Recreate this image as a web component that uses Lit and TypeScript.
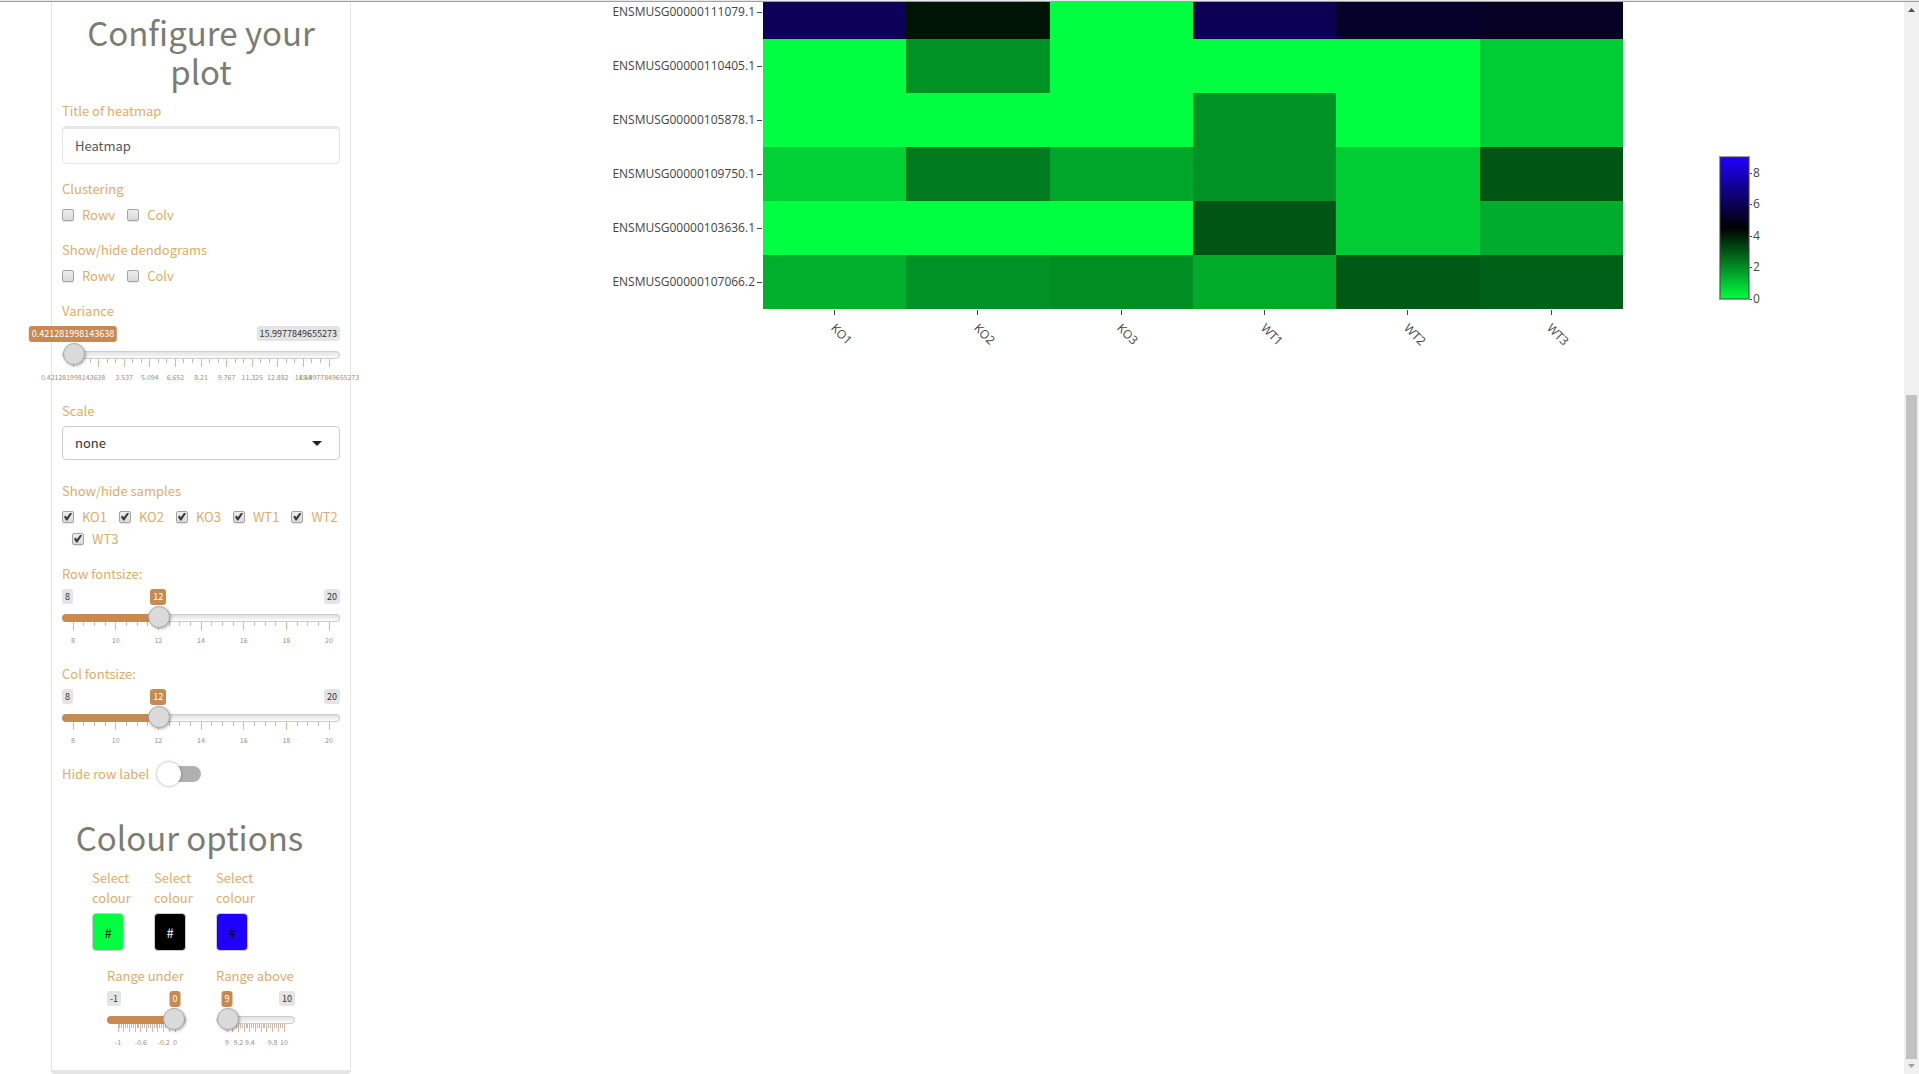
import { LitElement, html, svg, css, nothing } from "lit";
import { customElement, property } from "lit/decorators.js";

interface TickLabel {
  at: number;
  text: string;
}

const steps = (from: number, to: number, by: number): TickLabel[] => {
  const out: TickLabel[] = [];
  for (let v = from; v <= to; v += by) {
    out.push({ at: (v - from) / (to - from), text: String(v) });
  }
  return out;
};

@customElement("range-slider")
class RangeSlider extends LitElement {
  @property() label = "";
  @property({ type: Number }) min = 0;
  @property({ type: Number }) max = 1;
  @property({ type: Number }) value = 0;
  @property({ type: Number }) majors = 6;
  @property({ type: Number }) minors = 2;
  @property({ attribute: false }) ticks: TickLabel[] = [];

  static styles = css`
    :host {
      display: block;
      margin-bottom: 15px;
    }
    label {
      display: block;
      margin-bottom: 5px;
      white-space: nowrap;
    }
    .slider {
      position: relative;
      height: 60px;
    }
    .ends {
      display: flex;
      justify-content: space-between;
      height: 16px;
      margin-bottom: 1px;
    }
    .end,
    .current {
      box-sizing: border-box;
      padding: 0 3px;
      border-radius: 3px;
      white-space: nowrap;
      font-size: 9px;
    }
    .end {
      height: 15px;
      line-height: 15px;
      color: #333;
      background: #e4e4e4;
    }
    .max {
      margin-left: auto;
    }
    .current {
      position: absolute;
      top: 0;
      left: calc(11px + (100% - 22px) * var(--f));
      transform: translateX(-50%);
      min-width: 11px;
      height: 16px;
      line-height: 16px;
      color: #fff;
      background: #c78a51;
    }
    input {
      display: block;
      position: relative;
      appearance: none;
      width: 100%;
      height: 22px;
      margin: 0;
      background: none;
    }
    input::-webkit-slider-runnable-track {
      box-sizing: border-box;
      height: 8px;
      margin-top: 2px;
      border: 1px solid #ccc;
      border-radius: 4px;
      background: linear-gradient(#dedede, #fff) border-box;
    }
    input.filled::-webkit-slider-runnable-track {
      border-color: transparent;
      background: linear-gradient(
            90deg,
            #c78a51 calc(11px + (100% - 22px) * var(--f)),
            transparent 0
          )
          border-box,
        linear-gradient(#dedede, #fff) padding-box,
        linear-gradient(#ccc, #ccc) border-box;
    }
    input::-webkit-slider-thumb {
      appearance: none;
      box-sizing: border-box;
      width: 22px;
      height: 22px;
      margin-top: -9px;
      border: 1px solid #ababab;
      border-radius: 50%;
      background: #dadada;
      box-shadow: 1px 1px 3px rgba(0, 0, 0, 0.3);
    }
    .grid {
      position: absolute;
      left: 11px;
      top: 33px;
      width: calc(100% - 22px);
      height: 27px;
      overflow: visible;
    }
    .major {
      stroke: #dfb696;
      shape-rendering: crispEdges;
    }
    .minor {
      stroke: #bbb;
      shape-rendering: crispEdges;
    }
    text {
      font-size: 7px;
      fill: #999083;
      text-anchor: middle;
    }
  `;

  render() {
    const f = (this.value - this.min) / (this.max - this.min);
    const style = `--f:${f}`;
    const count = this.majors * (this.minors + 1);
    return html`
      <label for="range">${this.label}</label>
      <div class="slider" style=${style}>
        <svg class="grid" aria-hidden="true">
          ${Array.from({ length: count + 1 }, (_, i) => {
            const major = i % (this.minors + 1) === 0;
            const x = `${(i / count) * 100}%`;
            return svg`<line class=${major ? "major" : "minor"} x1=${x} x2=${x} y1="0" y2=${major ? 8 : 4} />`;
          })}
          ${this.ticks.map(
            (t) => svg`<text x=${`${t.at * 100}%`} y="21">${t.text}</text>`
          )}
        </svg>
        <div class="ends">
          ${f > 0.1 ? html`<span class="end">${this.min}</span>` : nothing}
          ${f < 0.9 ? html`<span class="end max">${this.max}</span>` : nothing}
        </div>
        <output class="current" for="range">${this.value}</output>
        <input
          id="range"
          type="range"
          class=${f > 0 ? "filled" : ""}
          min=${this.min}
          max=${this.max}
          step="any"
          .value=${String(this.value)}
        />
      </div>
    `;
  }
}

const SAMPLES = ["KO1", "KO2", "KO3", "WT1", "WT2", "WT3"];

const ROWS = [
  { gene: "ENSMUSG00000111079.1", cells: ["#0c0058", "#001405", "#00ff40", "#0b0054", "#050029", "#060024"] },
  { gene: "ENSMUSG00000110405.1", cells: ["#00ff40", "#009224", "#00ff40", "#00ff40", "#00ff40", "#00cd33"] },
  { gene: "ENSMUSG00000105878.1", cells: ["#00ff40", "#00ff40", "#00ff40", "#009224", "#00ff40", "#00cd33"] },
  { gene: "ENSMUSG00000109750.1", cells: ["#00d134", "#007a1e", "#00a629", "#009224", "#00cd33", "#005414"] },
  { gene: "ENSMUSG00000103636.1", cells: ["#00ff40", "#00ff40", "#00ff40", "#005414", "#00cd33", "#00ac2b"] },
  { gene: "ENSMUSG00000107066.2", cells: ["#00b02c", "#009224", "#008e23", "#00ab2a", "#005a16", "#006018"] },
];

@customElement("gene-heatmap")
class GeneHeatmap extends LitElement {
  static styles = css`
    :host {
      display: flex;
      font: 12px/16px "Open Sans", sans-serif;
      color: #444;
    }
    .plot {
      flex: 1;
      display: grid;
      grid-template-columns: 154px 1fr;
      align-content: start;
    }
    .genes,
    .cells {
      display: grid;
      grid-auto-rows: 54px;
    }
    .gene {
      display: flex;
      align-items: center;
      justify-content: flex-end;
      gap: 2px;
      padding-right: 1px;
    }
    .gene::after {
      content: "";
      width: 5px;
      height: 1px;
      background: #444;
    }
    .row,
    .samples {
      display: grid;
      grid-template-columns: repeat(6, 1fr);
    }
    .samples {
      grid-column: 2;
      padding-top: 1px;
    }
    .sample {
      display: flex;
      flex-direction: column;
      align-items: center;
    }
    .sample::before {
      content: "";
      width: 1px;
      height: 5px;
      background: #444;
    }
    .sample span {
      width: 0;
      margin: 3px 4px 0 0;
      transform: rotate(45deg);
      transform-origin: 0 50%;
      white-space: nowrap;
    }
    .scale {
      display: flex;
      padding: 171px 134px 0 96px;
    }
    .bar {
      box-sizing: border-box;
      width: 31px;
      height: 144px;
      border: 1px solid #999;
      outline: 1px solid rgba(68, 68, 68, 0.5);
      outline-offset: -2px;
      background: linear-gradient(#1f00ff, #000 50%, #00ff40);
    }
    .values {
      width: 20px;
      height: 144px;
      overflow: visible;
    }
    .values line {
      stroke: #444;
      shape-rendering: crispEdges;
    }
    .values text {
      fill: #444;
    }
  `;

  render() {
    return html`
      <div class="plot">
        <div class="genes">
          ${ROWS.map((r) => html`<div class="gene">${r.gene}</div>`)}
        </div>
        <div class="cells">
          ${ROWS.map(
            (r) => html`<div class="row">
              ${r.cells.map((c) => html`<div style="background:${c}"></div>`)}
            </div>`
          )}
        </div>
        <div class="samples">
          ${SAMPLES.map((s) => html`<div class="sample"><span>${s}</span></div>`)}
        </div>
      </div>
      <div class="scale">
        <div class="bar"></div>
        <svg class="values">
          ${[8, 6, 4, 2, 0].map((v) => {
            const y = Math.round(143 - (v / 9) * 142);
            return svg`<line x1="0" x2="2" y1=${y} y2=${y} /><text x="3" y=${y + 4}>${v}</text>`;
          })}
        </svg>
      </div>
    `;
  }
}

const VARIANCE_TICKS: TickLabel[] = [
  "0.421281998143638", "", "3.537", "5.094", "6.652", "8.21",
  "9.767", "11.325", "12.882", "14.44", "15.9977849655273",
]
  .map((text, i) => ({ at: i / 10, text }))
  .filter((t) => t.text !== "");

const UNDER_TICKS: TickLabel[] = [
  { at: 0, text: "-1" },
  { at: 0.4, text: "-0.6" },
  { at: 0.8, text: "-0.2" },
  { at: 1, text: "0" },
];

const ABOVE_TICKS: TickLabel[] = [
  { at: 0, text: "9" },
  { at: 0.2, text: "9.2" },
  { at: 0.4, text: "9.4" },
  { at: 0.8, text: "9.8" },
  { at: 1, text: "10" },
];

@customElement("app-root")
class AppRoot extends LitElement {
  static styles = css`
    :host {
      display: flex;
      box-sizing: border-box;
      height: 100vh;
      border-top: 1px solid #e8e8e8;
      box-shadow: inset 0 1px #a0a0a0;
      overflow: hidden;
      background: #fff;
      font: 13px/20px "Noto Sans CJK SC", sans-serif;
      color: #dfab68;
    }
    .page {
      flex: 1;
      display: flex;
      min-width: 0;
      margin-top: 1px;
      overflow: hidden;
    }
    .panel {
      box-sizing: border-box;
      flex: none;
      width: 300px;
      margin-left: 51px;
      padding: 11px 10px 0;
      border: solid #e5e5e5;
      border-width: 0 1px 4px;
      border-radius: 0 0 4px 4px;
    }
    h1 {
      margin: 0;
      font-size: 33px;
      font-weight: 400;
      line-height: 39px;
      text-align: center;
      color: #7c7c70;
    }
    .first {
      padding: 0 20px 10px;
    }
    .second {
      margin-top: 33px;
      padding: 0 23px 11px 0;
      line-height: 40px;
    }
    .group {
      margin: 0 0 15px;
      padding: 0;
      border: 0;
    }
    .group > label,
    legend {
      display: block;
      padding: 0;
      margin-bottom: 5px;
    }
    .text,
    select {
      display: block;
      box-sizing: border-box;
      width: 100%;
      padding: 0 12px;
      border-radius: 4px;
      background: #fff;
      font: inherit;
    }
    .text {
      height: 38px;
      border: 1px solid #e5e5e5;
      box-shadow: inset 0 2px #e9e9e9;
      color: #555;
    }
    .select {
      display: grid;
      align-items: center;
      margin-bottom: 21px;
    }
    .select > * {
      grid-area: 2 / 1;
    }
    .select > label {
      grid-area: 1 / 1;
    }
    select {
      appearance: none;
      height: 34px;
      border: 1px solid #ccc;
      color: #333;
    }
    .caret {
      justify-self: end;
      margin-right: 18px;
      border: solid transparent;
      border-width: 5px 5px 0;
      border-top-color: #222;
      pointer-events: none;
    }
    .checks {
      display: flex;
      flex-wrap: wrap;
      row-gap: 1px;
      margin-right: -8px;
    }
    .check {
      display: flex;
      align-items: center;
      height: 21px;
      gap: 8px;
      margin-left: 10px;
      margin-right: 2px;
    }
    .check:first-child {
      margin-left: 0;
    }
    .check input {
      appearance: none;
      box-sizing: border-box;
      display: grid;
      place-items: center;
      width: 12px;
      height: 12px;
      margin: 0;
      border: 1px solid #a4a4a4;
      border-radius: 2px;
      background: linear-gradient(#eee, #d9d9d9);
      box-shadow: 0 1px 1px rgba(0, 0, 0, 0.1);
    }
    .check input:checked::before {
      content: "";
      width: 8px;
      height: 8px;
      background: #3a3a3a;
      clip-path: polygon(0 55%, 18% 38%, 36% 58%, 80% 0, 100% 14%, 42% 100%, 28% 100%);
    }
    .toggle {
      display: flex;
      align-items: center;
      gap: 12px;
      height: 20px;
    }
    .toggle input {
      appearance: none;
      display: flex;
      align-items: center;
      width: 40px;
      height: 16px;
      margin: 0;
      border-radius: 8px;
      background: #b0b0b0;
    }
    .toggle input::before {
      content: "";
      flex: none;
      width: 24px;
      height: 24px;
      margin-left: -4px;
      border-radius: 50%;
      background: #fff;
      box-shadow: 0 0 3px rgba(0, 0, 0, 0.4);
    }
    .colours {
      display: flex;
      gap: 22px;
      padding-left: 30px;
      margin-bottom: 15px;
    }
    .colour {
      width: 40px;
    }
    .colour label {
      display: block;
      margin-bottom: 5px;
    }
    .colour input {
      display: block;
      box-sizing: border-box;
      width: 32px;
      height: 38px;
      padding: 0;
      border: 1px solid #ccc;
      border-radius: 4px;
      font: inherit;
      text-align: center;
    }
    .colour .low {
      background: #00ff40;
      color: #000;
    }
    .colour .mid {
      background: #000;
      color: #fff;
    }
    .colour .high {
      background: #1f00ff;
      color: #000;
    }
    .ranges {
      display: grid;
      grid-template-columns: 79px 79px;
      gap: 30px;
      padding-left: 45px;
    }
    gene-heatmap {
      flex: 1;
      min-width: 0;
      margin: -17px 0 0 258px;
    }
    .scrollbar {
      box-sizing: border-box;
      display: flex;
      flex-direction: column;
      align-items: center;
      width: 15px;
      margin-top: 1px;
      padding: 6px 0;
      background: #f0f0f0;
    }
    .arrow {
      flex: none;
      width: 7px;
      height: 4px;
    }
    .thumb {
      width: 11px;
      flex: 664;
      margin-bottom: 5px;
      background: #c1c1c1;
    }
    .space {
      flex: 383;
    }
  `;

  private checks(prefix: string, names: string[], checked: boolean) {
    return html`<div class="checks">
      ${names.map(
        (n) => html`<label class="check" for=${prefix + n}>
          <input id=${prefix + n} type="checkbox" .checked=${checked} />
          ${n}
        </label>`
      )}
    </div>`;
  }

  render() {
    return html`
      <div class="page">
        <form class="panel">
          <h1 class="first">Configure your plot</h1>
          <div class="group">
            <label for="title">Title of heatmap</label>
            <input class="text" id="title" type="text" value="Heatmap" />
          </div>
          <fieldset class="group">
            <legend>Clustering</legend>
            ${this.checks("cluster", ["Rowv", "Colv"], false)}
          </fieldset>
          <fieldset class="group">
            <legend>Show/hide dendograms</legend>
            ${this.checks("dendo", ["Rowv", "Colv"], false)}
          </fieldset>
          <range-slider
            label="Variance"
            min="0.421281998143638"
            max="15.9977849655273"
            value="0.421281998143638"
            majors="10"
            .ticks=${VARIANCE_TICKS}
          ></range-slider>
          <div class="group select">
            <label for="scale">Scale</label>
            <select id="scale">
              <option>none</option>
            </select>
            <span class="caret"></span>
          </div>
          <fieldset class="group">
            <legend>Show/hide samples</legend>
            ${this.checks("sample", SAMPLES, true)}
          </fieldset>
          <range-slider label="Row fontsize:" min="8" max="20" value="12" minors="3" .ticks=${steps(8, 20, 2)}></range-slider>
          <range-slider label="Col fontsize:" min="8" max="20" value="12" minors="3" .ticks=${steps(8, 20, 2)}></range-slider>
          <div class="toggle">
            <label for="hide">Hide row label</label>
            <input id="hide" type="checkbox" role="switch" />
          </div>
          <h1 class="second">Colour options</h1>
          <div class="colours">
            ${["low", "mid", "high"].map(
              (c) => html`<div class="colour">
                <label for=${c}>Select colour</label>
                <input id=${c} class=${c} type="text" value="#" />
              </div>`
            )}
          </div>
          <div class="ranges">
            <range-slider label="Range under" min="-1" max="0" value="0" majors="10" .ticks=${UNDER_TICKS}></range-slider>
            <range-slider label="Range above" min="9" max="10" value="9" majors="10" .ticks=${ABOVE_TICKS}></range-slider>
          </div>
        </form>
        <gene-heatmap></gene-heatmap>
      </div>
      <div class="scrollbar" aria-hidden="true">
        <svg class="arrow" viewBox="0 0 7 4"><path d="M0 4 3.5 0 7 4z" fill="#505050" /></svg>
        <div class="space"></div>
        <div class="thumb"></div>
        <svg class="arrow" viewBox="0 0 7 4"><path d="M0 0 3.5 4 7 0z" fill="#a3a3a3" /></svg>
      </div>
    `;
  }
}
